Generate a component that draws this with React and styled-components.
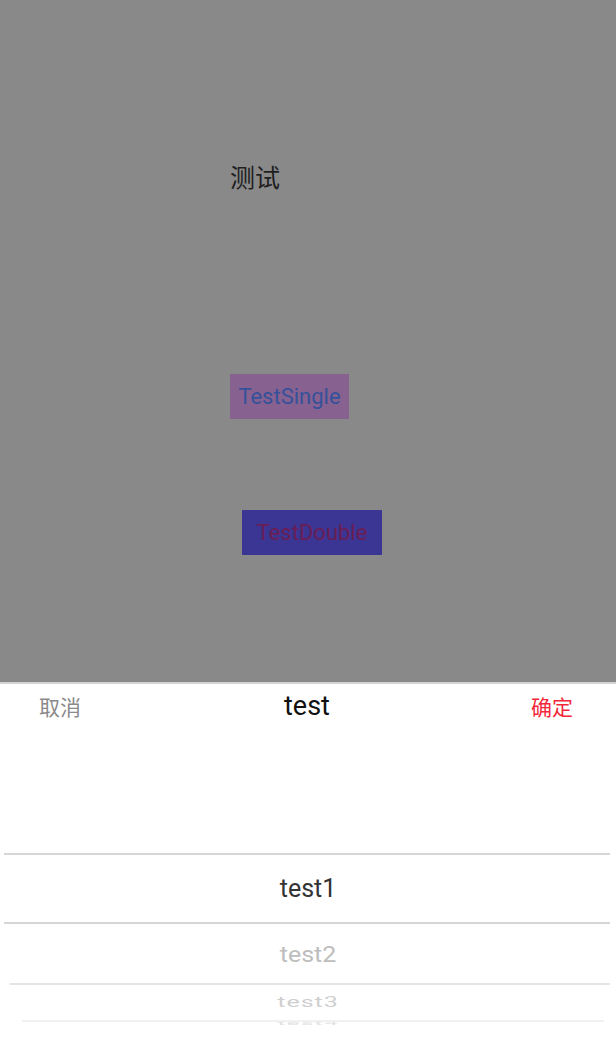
import React from "react";
import styled, { createGlobalStyle } from "styled-components";

const GlobalStyle = createGlobalStyle`
  html, body {
    margin: 0;
    padding: 0;
    background: #ffffff;
  }
  body {
    font-family: Roboto, "Noto Sans CJK SC", sans-serif;
  }
`;

const Screen = styled.div`
  width: 616px;
  height: 1050px;
  display: flex;
  flex-direction: column;
  overflow: hidden;
`;

const Backdrop = styled.div`
  height: 682px;
  background: #898989;
  display: flex;
  flex-direction: column;
  align-items: flex-start;
  padding-top: 160px;
  box-sizing: border-box;
`;

const Label = styled.div`
  margin-left: 230px;
  font-size: 25px;
  line-height: 32px;
  color: #1f1f1f;
  font-family: "Noto Sans CJK SC", sans-serif;
`;

const Block = styled.div`
  margin-left: ${(p) => p.left}px;
  margin-top: ${(p) => p.top}px;
  width: ${(p) => p.w}px;
  height: 45px;
  background: ${(p) => p.bg};
  color: ${(p) => p.fg};
  display: flex;
  align-items: center;
  justify-content: center;
  font-size: 22px;
`;

const Sheet = styled.div`
  flex: 1;
  background: #ffffff;
  border-top: 2px solid #d4d4d4;
  display: flex;
  flex-direction: column;
`;

const Toolbar = styled.div`
  height: 44px;
  display: flex;
  align-items: center;
  justify-content: space-between;
  padding: 0 43px 0 39px;
`;

const ToolButton = styled.span`
  font-family: "Noto Sans CJK SC", sans-serif;
  font-size: 21px;
  color: ${(p) => p.color};
`;

const Title = styled.span`
  font-size: 27px;
  color: #111;
  margin-left: 2px;
`;

const Wheel = styled.div`
  margin-top: 125px;
  display: flex;
  flex-direction: column;
`;

const Divider = styled.div`
  height: 2px;
  margin: 0 ${(p) => p.right}px 0 ${(p) => p.left}px;
  background: ${(p) => p.color};
`;

const Item = styled.div`
  height: ${(p) => p.h}px;
  display: flex;
  align-items: center;
  justify-content: center;
  overflow: hidden;
  font-size: 25px;
  color: ${(p) => p.color};
`;

const ItemText = styled.span`
  display: inline-block;
  transform: scaleY(${(p) => p.squash});
  margin-top: ${(p) => p.shift || 0}px;
  letter-spacing: ${(p) => p.spread || 0}px;
`;

export default function App() {
  return (
    <Screen>
      <GlobalStyle />
      <Backdrop>
        <Label>测试</Label>
        <Block left={230} top={182} w={119} bg="#87618f" fg="#35519a">
          TestSingle
        </Block>
        <Block left={242} top={91} w={140} bg="#3b3593" fg="#6a1e55">
          TestDouble
        </Block>
      </Backdrop>
      <Sheet>
        <Toolbar>
          <ToolButton color="#8a8a8a">取消</ToolButton>
          <Title>test</Title>
          <ToolButton color="#f2283a">确定</ToolButton>
        </Toolbar>
        <Wheel>
          <Divider left={4} right={6} color="#d6d6d6" />
          <Item h={67} color="#333">
            <ItemText squash={1}>test1</ItemText>
          </Item>
          <Divider left={4} right={6} color="#d6d6d6" />
          <Item h={59} color="#bdbdbd">
            <ItemText squash={0.85} shift={2}>test2</ItemText>
          </Item>
          <Divider left={10} right={6} color="#e4e4e4" />
          <Item h={35} color="#cfcfcf">
            <ItemText squash={0.55} spread={1}>
              test3
            </ItemText>
          </Item>
          <Divider left={22} right={12} color="#f1f1f1" />
          <Item h={10} color="#e2e2e2">
            <ItemText squash={0.22} shift={-8} spread={1}>
              test4
            </ItemText>
          </Item>
        </Wheel>
      </Sheet>
    </Screen>
  );
}
